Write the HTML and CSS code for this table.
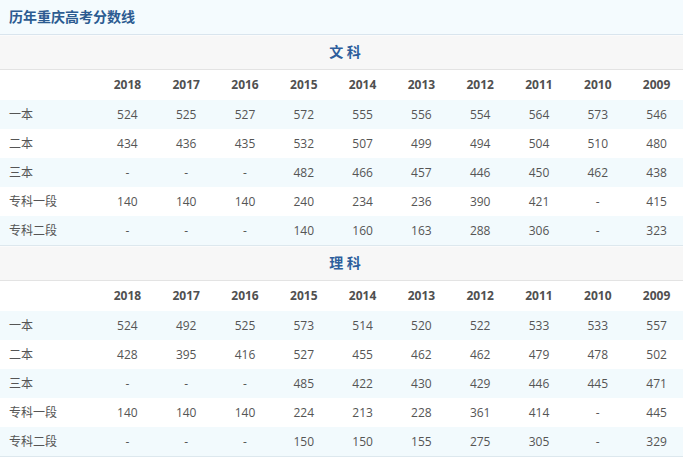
FILE: index.html
```html
<!DOCTYPE html>
<html lang="zh-CN">
<head>
<meta charset="utf-8">
<title>历年重庆高考分数线</title>
<link rel="stylesheet" href="styles.css">
</head>
<body>
<div class="panel">
  <div class="title">历年重庆高考分数线</div>
  <div class="section">文 科</div>
  <table class="scores">
    <colgroup><col class="c-label"><col span="10" class="c-year"></colgroup>
    <thead>
      <tr class="head"><th></th><th>2018</th><th>2017</th><th>2016</th><th>2015</th><th>2014</th><th>2013</th><th>2012</th><th>2011</th><th>2010</th><th>2009</th></tr>
    </thead>
    <tbody>
      <tr class="alt"><td>一本</td><td>524</td><td>525</td><td>527</td><td>572</td><td>555</td><td>556</td><td>554</td><td>564</td><td>573</td><td>546</td></tr>
      <tr><td>二本</td><td>434</td><td>436</td><td>435</td><td>532</td><td>507</td><td>499</td><td>494</td><td>504</td><td>510</td><td>480</td></tr>
      <tr class="alt"><td>三本</td><td>-</td><td>-</td><td>-</td><td>482</td><td>466</td><td>457</td><td>446</td><td>450</td><td>462</td><td>438</td></tr>
      <tr><td>专科一段</td><td>140</td><td>140</td><td>140</td><td>240</td><td>234</td><td>236</td><td>390</td><td>421</td><td>-</td><td>415</td></tr>
      <tr class="alt last"><td>专科二段</td><td>-</td><td>-</td><td>-</td><td>140</td><td>160</td><td>163</td><td>288</td><td>306</td><td>-</td><td>323</td></tr>
    </tbody>
  </table>
  <div class="section">理 科</div>
  <table class="scores">
    <colgroup><col class="c-label"><col span="10" class="c-year"></colgroup>
    <thead>
      <tr class="head"><th></th><th>2018</th><th>2017</th><th>2016</th><th>2015</th><th>2014</th><th>2013</th><th>2012</th><th>2011</th><th>2010</th><th>2009</th></tr>
    </thead>
    <tbody>
      <tr class="alt"><td>一本</td><td>524</td><td>492</td><td>525</td><td>573</td><td>514</td><td>520</td><td>522</td><td>533</td><td>533</td><td>557</td></tr>
      <tr><td>二本</td><td>428</td><td>395</td><td>416</td><td>527</td><td>455</td><td>462</td><td>462</td><td>479</td><td>478</td><td>502</td></tr>
      <tr class="alt"><td>三本</td><td>-</td><td>-</td><td>-</td><td>485</td><td>422</td><td>430</td><td>429</td><td>446</td><td>445</td><td>471</td></tr>
      <tr><td>专科一段</td><td>140</td><td>140</td><td>140</td><td>224</td><td>213</td><td>228</td><td>361</td><td>414</td><td>-</td><td>445</td></tr>
      <tr class="alt last"><td>专科二段</td><td>-</td><td>-</td><td>-</td><td>150</td><td>150</td><td>155</td><td>275</td><td>305</td><td>-</td><td>329</td></tr>
    </tbody>
  </table>
</div>
</body>
</html>
```
FILE: styles.css
```css
html, body {
  margin: 0;
  padding: 0;
  background: #ffffff;
  overflow: hidden;
}
body {
  font-family: "Open Sans", "Noto Sans CJK SC", sans-serif;
  color: #555555;
}
.panel {
  width: 686px;
}
.title {
  box-sizing: border-box;
  height: 35px;
  padding-left: 9px;
  line-height: 33px;
  font-size: 14px;
  font-weight: bold;
  color: #2c5b91;
  background: #f4fbfe;
  border-bottom: 1px solid #d9e5ee;
}
.section {
  box-sizing: border-box;
  height: 35px;
  line-height: 32px;
  text-align: center;
  font-size: 14px;
  font-weight: bold;
  color: #2d5e9c;
  background: #f7f7f7;
  border-top: 1px solid #fbfbfb;
  border-bottom: 1px solid #e3e3e3;
  padding-left: 4px;
}
.scores {
  width: 686px;
  table-layout: fixed;
  border-collapse: separate;
  border-spacing: 0;
  font-size: 12px;
  line-height: 16px;
}
.c-label { width: 98px; }
.c-year { width: 58.8px; }
.scores th, .scores td {
  padding: 0;
  text-align: center;
  white-space: nowrap;
}
.scores th:first-child, .scores td:first-child {
  text-align: left;
  padding-left: 9px;
}
.head th {
  height: 30px;
  font-weight: bold;
  color: #505050;
  background: #ffffff;
}
.scores tbody td {
  height: 29px;
}
.alt td {
  background: #f2fafd;
}
.last td {
  height: 28px;
  border-bottom: 1px solid #dde8ee;
}
```
